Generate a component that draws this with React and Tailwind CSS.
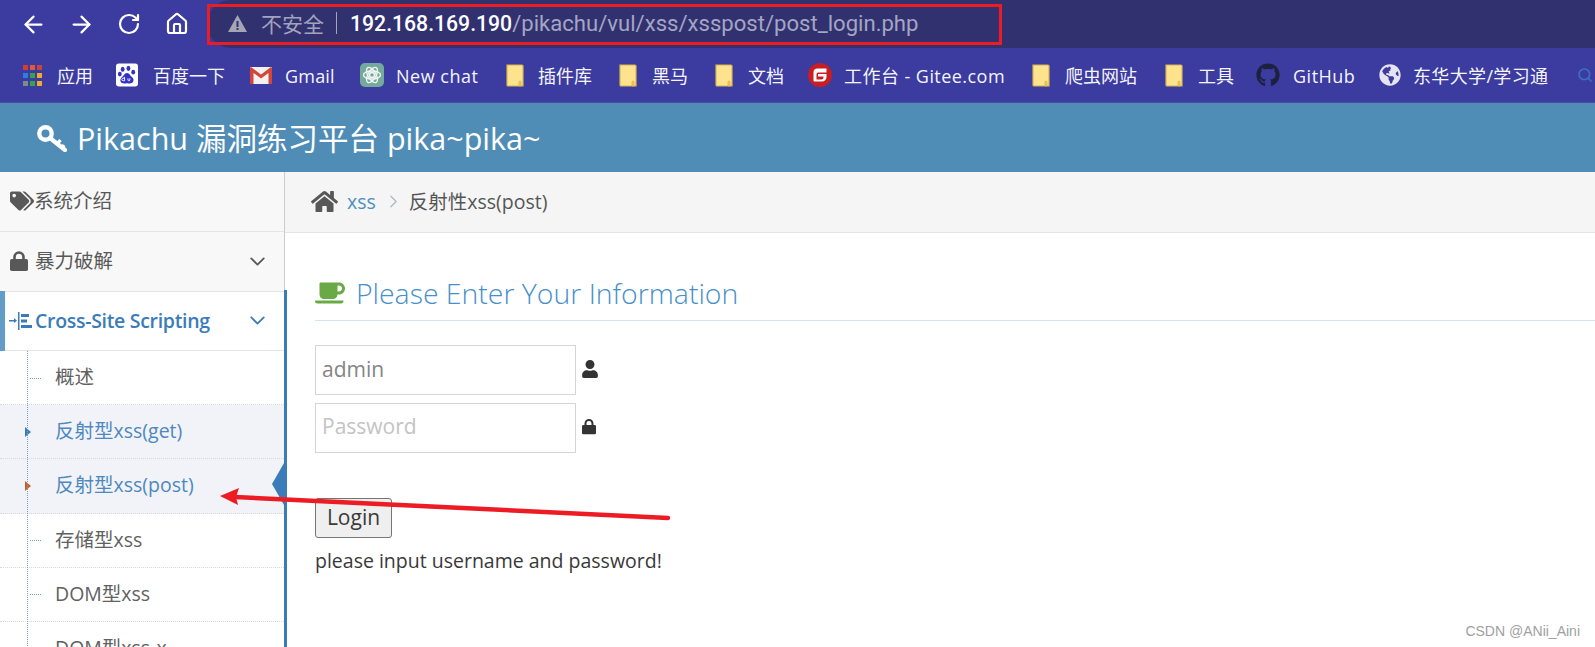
import React from "react";
import { ArrowLeft, ArrowRight, RotateCw, Home, ChevronDown, ChevronRight, Search } from "lucide-react";
import { FaTags, FaUser, FaHome, FaCoffee, FaGithub, FaGlobeAmericas } from "react-icons/fa";

const cjk = "font-['Open_Sans','Noto_Sans_CJK_SC',sans-serif]";

function Folder() {
  return (
    <svg width="18" height="23" viewBox="0 0 18 23">
      <path d="M1 1h15a1 1 0 0 1 1 1v20H2a1 1 0 0 1-1-1z" fill="#fde38d" stroke="#d8b552" strokeWidth="1.2" />
      <path d="M13 22v-4a1 1 0 0 1 2 0v4z" fill="#f4c95b" stroke="#d8b552" strokeWidth="0.8" />
    </svg>
  );
}

function Apps() {
  const cells = ["bg-[#d23f31]", "bg-[#e25a3a]", "bg-[#c9443c]", "bg-[#2f7de1]", "bg-[#37a24a]", "bg-[#f0a92c]", "bg-[#7b8a8b]", "bg-[#37a24a]", "bg-[#f0a92c]"];
  return (
    <div className="grid grid-cols-3 gap-x-[2px] gap-y-[3px] w-[19px]">
      {cells.map((c, i) => (
        <span key={i} className={`w-[5px] h-[5px] block ${c}`} />
      ))}
    </div>
  );
}

function Baidu() {
  return (
    <svg width="22" height="24" viewBox="0 0 23 24">
      <rect width="23" height="24" rx="3" fill="#fff" />
      <g fill="#3432c6">
        <ellipse cx="7" cy="6" rx="2" ry="2.7" />
        <ellipse cx="13" cy="5" rx="2" ry="2.7" />
        <ellipse cx="18" cy="9" rx="2" ry="2.5" />
        <ellipse cx="4" cy="11" rx="2" ry="2.5" />
        <path d="M11.5 10c3 0 3 3 6 5 2 3 0 6-3 6-1.500 0-2-.5-3-.5s-1.500.5-3 .5c-3.500 0-5-3-3-6 3-2 3-5 6-5z" />
      </g>
      <path d="M9 14v4H7.500a1.300 1.300 0 0 1 0-2.700H9M12.500 15.500v1.800c0 1 2 1 2 0v-1.800" fill="none" stroke="#fff" strokeWidth="1" />
    </svg>
  );
}

function Gmail() {
  return (
    <svg width="22" height="17" viewBox="0 0 22 17">
      <rect width="22" height="17" fill="#f2f2f2" rx="1" />
      <path d="M0 1v16h3.500V6L11 11.500 18.500 6v11H22V1l-1-1-10 7.500L1 0z" fill="#d3473a" />
    </svg>
  );
}

function ChatIcon() {
  return (
    <svg width="24" height="24" viewBox="0 0 24 24">
      <rect width="24" height="24" rx="5" fill="#74aa9c" />
      <g fill="none" stroke="#f1f5f3" strokeWidth="1.400">
        <circle cx="12" cy="12" r="2.500" />
        <ellipse cx="12" cy="12" rx="8.500" ry="4" transform="rotate(60 12 12)" />
        <ellipse cx="12" cy="12" rx="8.500" ry="4" transform="rotate(-60 12 12)" />
        <ellipse cx="12" cy="12" rx="8.500" ry="4" />
      </g>
    </svg>
  );
}

function Gitee() {
  return (
    <svg width="24" height="24" viewBox="0 0 24 24">
      <circle cx="12" cy="12" r="12" fill="#c71d23" />
      <path d="M18.500 5.500H9.500a4 4 0 0 0-4 4v8a1 1 0 0 0 1 1h7.500a4.500 4.500 0 0 0 4.500-4.500v-3h-8.500v2.500h5.500v1a2 2 0 0 1-2 2H8.500v-5.500a1.500 1.500 0 0 1 1.500-1.500h8.500z" fill="#fff" />
    </svg>
  );
}

function Bm({ icon, label, box, text }) {
  return (
    <div className={`flex items-center shrink-0 ${box}`}>
      {icon}
      <span className={`whitespace-nowrap text-[18px] pt-[2px] text-[#f4f4fb] ${cjk} ${text}`}>{label}</span>
    </div>
  );
}

function LockIcon({ cls, w, h }) {
  return (
    <svg width={w} height={h} viewBox="0 0 18 20" className={cls}>
      <path d="M4.500 9V6a4.500 4.500 0 0 1 9 0v3" fill="none" stroke="currentColor" strokeWidth="2.600" />
      <rect x="0" y="8" width="18" height="12" rx="1.800" fill="currentColor" />
    </svg>
  );
}

function KeyIcon() {
  return (
    <svg width="30" height="27" viewBox="0 0 30 27" fill="none" stroke="#fff" className="mr-[10px]">
      <circle cx="8.500" cy="8.500" r="6.200" strokeWidth="4.400" />
      <path d="M13 13L28 25" strokeWidth="4.200" strokeLinecap="round" />
      <path d="M20 19l3.500-4M25 23l2-3" strokeWidth="3.400" />
    </svg>
  );
}

function TopRow({ icon, label, chevron, active, height }) {
  return (
    <div className={`relative flex items-center ${height} pl-[10px] pr-[14px] pb-[1px] border-b border-[#e5e5e5] ${active ? "bg-white text-[#3a7cba] font-semibold tracking-[-0.3px]" : "bg-[#f8f8f8] text-[#585858]"}`}>
      {active && <span className="absolute left-0 -top-px -bottom-px w-[5px] bg-[#629cc9]" />}
      <div className="flex items-center">
        {icon}
        <span className={`text-[19.500px] leading-none whitespace-nowrap ${cjk}`}>{label}</span>
      </div>
      {chevron && <ChevronDown size={25} strokeWidth={1.700} className="ml-auto" />}
    </div>
  );
}

function SubRow({ label, marker, hi }) {
  return (
    <div className={`relative flex items-center h-[54.200px] pl-[55px] pb-[2px] border-b border-dotted border-[#d9d9d9] ${hi ? "bg-[#f1f3f8] text-[#4e88bf]" : "bg-white text-[#616161]"}`}>
      {marker === "dash" && <span className="absolute left-[30px] top-1/2 w-[11px] border-t border-dotted border-[#7a9fc0]" />}
      {marker === "blue" && <span className="absolute left-[25px] top-1/2 -mt-[5px] border-y-[5px] border-y-transparent border-l-[6px] border-l-[#3a7cba]" />}
      {marker === "orange" && <span className="absolute left-[25px] top-1/2 -mt-[5px] border-y-[5px] border-y-transparent border-l-[6px] border-l-[#c4622e]" />}
      <span className={`text-[19.500px] whitespace-nowrap ${cjk}`}>{label}</span>
    </div>
  );
}

function XssIcon() {
  return (
    <svg width="24" height="20" viewBox="0 0 24 20" className="mr-[2px] -ml-[1px]" fill="#3a7cba">
      <rect x="0" y="9" width="6" height="1.500" />
      <path d="M5 7l3 2.700L5 12z" />
      <rect x="9" y="1" width="1.500" height="18" />
      <rect x="12" y="3" width="8" height="3" />
      <rect x="12" y="8.500" width="6" height="3" />
      <rect x="12" y="14" width="11" height="3" />
    </svg>
  );
}

export default function App() {
  return (
    <div className={`relative w-[1595px] h-[647px] overflow-hidden bg-white ${cjk}`}>
      {/* Browser toolbar */}
      <div className="flex items-center h-[48px] bg-[#3c3ba0] pl-[20px]">
        <div className="flex items-center gap-[21px] text-white shrink-0 w-[187px]">
          <ArrowLeft size={27} strokeWidth={2} />
          <ArrowRight size={27} strokeWidth={2} />
          <RotateCw size={24} strokeWidth={2.200} className="ml-[1px]" />
          <Home size={24} strokeWidth={2.200} className="ml-[3px]" />
        </div>
        <div className="flex-1 h-[48px] bg-[#32316f] rounded-l-[24px] flex items-center pl-[21px] pb-[2px]">
          <svg width="19" height="17" viewBox="0 0 19 17">
            <path d="M9.500 0L19 17H0z" fill="#a5a5b5" />
            <rect x="8.500" y="6" width="2" height="6" fill="#32316f" />
            <rect x="8.500" y="13" width="2" height="2" fill="#32316f" />
          </svg>
          <span className="ml-[14px] text-[21px] text-[#a3a3bd] font-['Noto_Sans_CJK_SC',sans-serif] leading-none">不安全</span>
          <span className="ml-[12px] w-px h-[22px] bg-[#a3a3bd]" />
          <span className="ml-[13px] font-['Roboto',sans-serif] leading-none whitespace-nowrap">
            <span className="text-white font-medium text-[21.200px]">192.168.169.190</span>
            <span className="text-[#a5a5c4] text-[22.100px]">/pikachu/vul/xss/xsspost/post_login.php</span>
          </span>
        </div>
      </div>

      {/* Bookmarks */}
      <div className="flex items-center h-[55px] bg-[#3c3ba0] border-b border-[#4b4aae] pl-[23px] overflow-hidden">
        <Bm box="" icon={<Apps />} text="ml-[15px] w-[36px]" label="应用" />
        <Bm box="ml-[23px]" icon={<Baidu />} text="ml-[15px] w-[72px]" label="百度一下" />
        <Bm box="ml-[25px]" icon={<Gmail />} text="ml-[13px] w-[50px] tracking-[0.2px]" label="Gmail" />
        <Bm box="ml-[25px]" icon={<ChatIcon />} text="ml-[12px] w-[81px] tracking-[0.5px]" label="New chat" />
        <Bm box="ml-[29px]" icon={<Folder />} text="ml-[14px] w-[55px]" label="插件库" />
        <Bm box="ml-[26px]" icon={<Folder />} text="ml-[15px] w-[37px]" label="黑马" />
        <Bm box="ml-[26px]" icon={<Folder />} text="ml-[15px] w-[37px]" label="文档" />
        <Bm box="ml-[23px]" icon={<Gitee />} text="ml-[12px] w-[160px] tracking-[0.45px]" label="工作台 - Gitee.com" />
        <Bm box="ml-[28px]" icon={<Folder />} text="ml-[15px] w-[74px]" label="爬虫网站" />
        <Bm box="ml-[26px]" icon={<Folder />} text="ml-[15px] w-[37px]" label="工具" />
        <Bm box="ml-[21px]" icon={<FaGithub size={24} className="text-[#1d2140]" />} text="ml-[13px] w-[62px] tracking-[0.5px]" label="GitHub" />
        <Bm box="ml-[24px]" icon={<FaGlobeAmericas size={22} className="text-[#e4e4f2]" />} text="ml-[12px] w-[137px] tracking-[0.35px]" label="东华大学/学习通" />
        <Search size={16} strokeWidth={2.500} className="ml-[27px] text-[#3a6fc4] shrink-0" />
      </div>

      {/* Header */}
      <div className="flex items-center h-[69px] bg-[#4f8db7] pl-[37px] pt-[1px] text-white">
        <KeyIcon />
        <span className={`text-[30.500px] leading-none whitespace-nowrap ${cjk}`}>Pikachu 漏洞练习平台 pika~pika~</span>
      </div>

      <div className="flex">
        {/* Sidebar */}
        <div className="relative w-[285px] shrink-0 border-r border-[#cccccc]">
          <TopRow height="h-[60px]" icon={<FaTags size={24} className="text-[#585858]" />} label="系统介绍" />
          <TopRow height="h-[60px]" icon={<LockIcon w={18} h={20} cls="text-[#585858] mr-[7px]" />} label="暴力破解" chevron />
          <TopRow height="h-[59px]" icon={<XssIcon />} label="Cross-Site Scripting" chevron active />
          <div className="relative">
            <span className="absolute left-[27px] top-0 bottom-0 border-l border-dotted border-[#7a9fc0] z-10" />
            <SubRow label="概述" marker="dash" />
            <SubRow label="反射型xss(get)" marker="blue" hi />
            <SubRow label="反射型xss(post)" marker="orange" hi />
            <SubRow label="存储型xss" marker="dash" />
            <SubRow label="DOM型xss" marker="dash" />
            <SubRow label="DOM型xss-x" marker="dash" />
          </div>
          <span className="absolute -right-[3px] top-[118px] bottom-0 w-[3px] bg-[#3a7cba]" />
          <span className="absolute right-0 top-[291px] border-y-[21px] border-y-transparent border-r-[12px] border-r-[#3a7cba]" />
        </div>

        {/* Main */}
        <div className="flex-1 min-w-0">
          <div className="flex items-center h-[61px] bg-[#f5f5f5] border-b border-[#e5e5e5] pl-[26px] pb-[1px]">
            <FaHome size={27} className="text-[#585858]" />
            <span className="ml-[9px] text-[19.500px] text-[#4c8fbd]">xss</span>
            <ChevronRight size={21} strokeWidth={1.500} className="ml-[7px] text-[#b2b6bf]" />
            <span className="ml-[5px] text-[19.500px] text-[#555555]">反射性xss(post)</span>
          </div>

          <div className="pl-[30px] pt-[40px]">
            <div className="flex items-center h-[48px] border-b border-[#d5e3ef] pb-[7px]">
              <FaCoffee size={30} className="text-[#69aa46]" />
              <span className="ml-[11px] text-[28.400px] font-light text-[#478fca] leading-none whitespace-nowrap">Please Enter Your Information</span>
            </div>
            <div className="flex items-center mt-[24px]">
              <div className="w-[261px] h-[50px] border border-[#d5d5d5] flex items-center pl-[6px] text-[21px] text-[#858585]">admin</div>
              <FaUser size={18} className="ml-[5px] mb-[2px] text-[#333333]" />
            </div>
            <div className="flex items-center mt-[8px]">
              <div className="w-[261px] h-[50px] border border-[#d5d5d5] flex items-center pl-[6px] pb-[2px] text-[21px] text-[#c4c4c4]">Password</div>
              <LockIcon w={14} h={17} cls="ml-[6px] mb-[4px] text-[#333333]" />
            </div>
            <button className="block mt-[45px] w-[77px] h-[40px] pb-[2px] bg-[#efefef] border border-[#767676] rounded-[3px] text-[21px] text-[#393939] leading-none">Login</button>
            <p className="mt-[8px] text-[19.500px] text-[#393939] whitespace-nowrap">please input username and password!</p>
          </div>
        </div>
      </div>

      {/* Annotation overlays */}
      <div className="absolute left-[207px] top-[4px] w-[795px] h-[41px] border-[3px] border-[#ed1c24]" />
      <svg className="absolute left-0 top-0 pointer-events-none" width="1595" height="647">
        <line x1="668" y1="518" x2="235" y2="497" stroke="#ed1c24" strokeWidth="4.500" strokeLinecap="round" />
        <path d="M220 496L239 488L236 497L238 505z" fill="#ed1c24" />
      </svg>
      <span className="absolute right-[15px] top-[624px] text-[14px] text-[#a0a0a0] font-['Liberation_Sans',sans-serif] leading-none">CSDN @ANii_Aini</span>
    </div>
  );
}
